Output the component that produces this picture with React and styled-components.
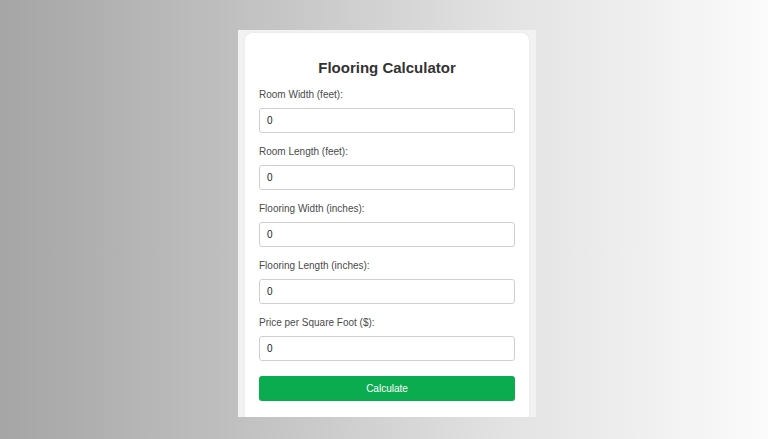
import React, { useState } from "react";
import styled, { createGlobalStyle } from "styled-components";

const GlobalStyle = createGlobalStyle`
  html, body {
    margin: 0;
    padding: 0;
  }
  body {
    font-family: "Liberation Sans", Arial, sans-serif;
  }
`;

const Page = styled.div`
  width: 768px;
  height: 439px;
  overflow: hidden;
  background: linear-gradient(to right, #a5a5a5 0%, #c4c4c4 35%, #e2e2e2 65%, #fbfbfb 100%);
  display: flex;
  justify-content: center;
  padding-top: 30px;
  box-sizing: border-box;
`;

const Frame = styled.div`
  width: 298px;
  height: 387px;
  margin-left: 6px;
  background: #f2f2f2;
  padding: 3px 7px 0 7px;
  box-sizing: border-box;
  display: flex;
  overflow: hidden;
`;

const Card = styled.div`
  flex: 1;
  background: #ffffff;
  border-radius: 8px 8px 0 0;
  padding: 26px 14px 0 14px;
  box-shadow: 0 0 3px rgba(0, 0, 0, 0.06);
`;

const Title = styled.h2`
  margin: 0 0 13px 0;
  font-size: 15px;
  line-height: 17px;
  font-weight: bold;
  color: #333333;
  text-align: center;
`;

const Field = styled.div`
  margin-bottom: 13px;
`;

const Label = styled.label`
  display: block;
  font-size: 10px;
  line-height: 12px;
  color: #4a4a4a;
  margin-bottom: 7px;
`;

const Input = styled.input`
  display: block;
  width: 100%;
  height: 25px;
  box-sizing: border-box;
  border: 1px solid #cfcfcf;
  border-radius: 3px;
  padding: 0 7px;
  font-family: "Liberation Sans", Arial, sans-serif;
  font-size: 10px;
  color: #222;
  outline: none;
`;

const Button = styled.button`
  display: block;
  width: 100%;
  height: 25px;
  margin-top: 15px;
  border: none;
  border-radius: 3px;
  background: #0bab4f;
  color: #ffffff;
  font-family: "Liberation Sans", Arial, sans-serif;
  font-size: 10px;
  cursor: pointer;
`;

const fields = [
  { key: "roomWidth", label: "Room Width (feet):" },
  { key: "roomLength", label: "Room Length (feet):" },
  { key: "floorWidth", label: "Flooring Width (inches):" },
  { key: "floorLength", label: "Flooring Length (inches):" },
  { key: "price", label: "Price per Square Foot ($):" },
];

export default function App() {
  const [values, setValues] = useState({
    roomWidth: "0",
    roomLength: "0",
    floorWidth: "0",
    floorLength: "0",
    price: "0",
  });

  const update = (key) => (e) => setValues({ ...values, [key]: e.target.value });

  return (
    <>
      <GlobalStyle />
      <Page>
        <Frame>
          <Card>
            <Title>Flooring Calculator</Title>
            {fields.map((f) => (
              <Field key={f.key}>
                <Label htmlFor={f.key}>{f.label}</Label>
                <Input id={f.key} type="number" value={values[f.key]} onChange={update(f.key)} />
              </Field>
            ))}
            <Button>Calculate</Button>
          </Card>
        </Frame>
      </Page>
    </>
  );
}
